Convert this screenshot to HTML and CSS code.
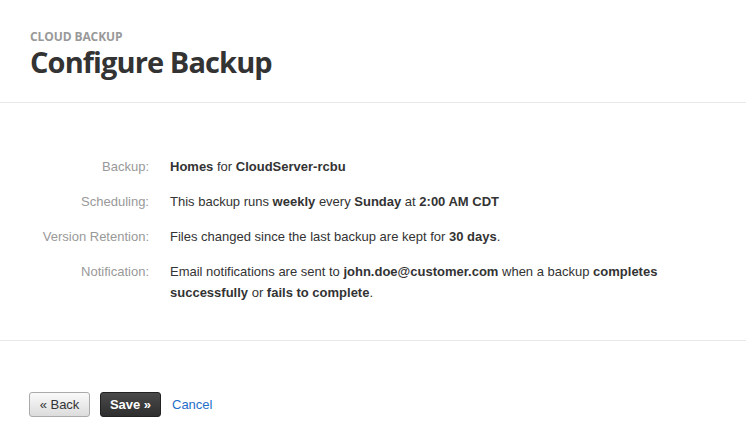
FILE: index.html
```html
<!DOCTYPE html>
<html>
<head>
<meta charset="utf-8">
<link rel="stylesheet" href="styles.css">
</head>
<body>
<header class="header">
  <div class="eyebrow">CLOUD BACKUP</div>
  <h1 class="title">Configure Backup</h1>
</header>
<section class="details">
  <div class="row">
    <div class="label">Backup:</div>
    <div class="value"><b>Homes</b> for <b>CloudServer-rcbu</b></div>
  </div>
  <div class="row">
    <div class="label">Scheduling:</div>
    <div class="value">This backup runs <b>weekly</b> every <b>Sunday</b> at <b>2:00 AM CDT</b></div>
  </div>
  <div class="row">
    <div class="label">Version Retention:</div>
    <div class="value">Files changed since the last backup are kept for <b>30 days</b>.</div>
  </div>
  <div class="row">
    <div class="label">Notification:</div>
    <div class="value">Email notifications are sent to <b>john.doe@customer.com</b> when a backup <b>completes successfully</b> or <b>fails to complete</b>.</div>
  </div>
</section>
<footer class="actions">
  <button class="btn btn-back">« Back</button>
  <button class="btn btn-save">Save »</button>
  <a class="cancel" href="#">Cancel</a>
</footer>
</body>
</html>
```
FILE: styles.css
```css
html, body {
  margin: 0;
  padding: 0;
  background: #fff;
}
body {
  font-family: "Liberation Sans", Arial, sans-serif;
  font-size: 13px;
  color: #333;
  width: 746px;
}
.header {
  padding: 30px 30px 0 30px;
  height: 72px;
  border-bottom: 1px solid #e8e8e8;
}
.eyebrow {
  font-family: "Open Sans", sans-serif;
  font-weight: 700;
  font-size: 12px;
  line-height: 14px;
  color: #999;
  letter-spacing: -0.1px;
}
.title {
  margin: 0;
  font-family: "Open Sans", sans-serif;
  font-weight: 700;
  font-size: 29px;
  line-height: 36px;
  color: #333;
  letter-spacing: -0.9px;
}
.details {
  padding: 53px 30px 37px 30px;
  border-bottom: 1px solid #e8e8e8;
  display: flex;
  flex-direction: column;
  gap: 14px;
}
.row {
  display: flex;
  gap: 21px;
  line-height: 21px;
}
.label {
  width: 119px;
  flex: none;
  text-align: right;
  color: #999;
}
.value {
  width: 500px;
  color: #333;
}
.value b {
  font-weight: 700;
}
.actions {
  padding: 51px 29px 0 29px;
  display: flex;
  align-items: center;
  gap: 10px;
}
.btn {
  font-family: "Liberation Sans", Arial, sans-serif;
  font-size: 13px;
  height: 25px;
  width: 61px;
  padding: 0;
  border-radius: 3px;
  white-space: nowrap;
  cursor: pointer;
}
.btn-back {
  border: 1px solid #aaa;
  background: linear-gradient(#fafafa, #dcdcdc);
  color: #333;
}
.btn-save {
  border: 1px solid #222;
  background: linear-gradient(#4a4a4a, #2e2e2e);
  color: #fff;
  font-weight: 700;
}
.cancel {
  color: #1e6fc8;
  text-decoration: none;
  margin-left: 1px;
}
```
